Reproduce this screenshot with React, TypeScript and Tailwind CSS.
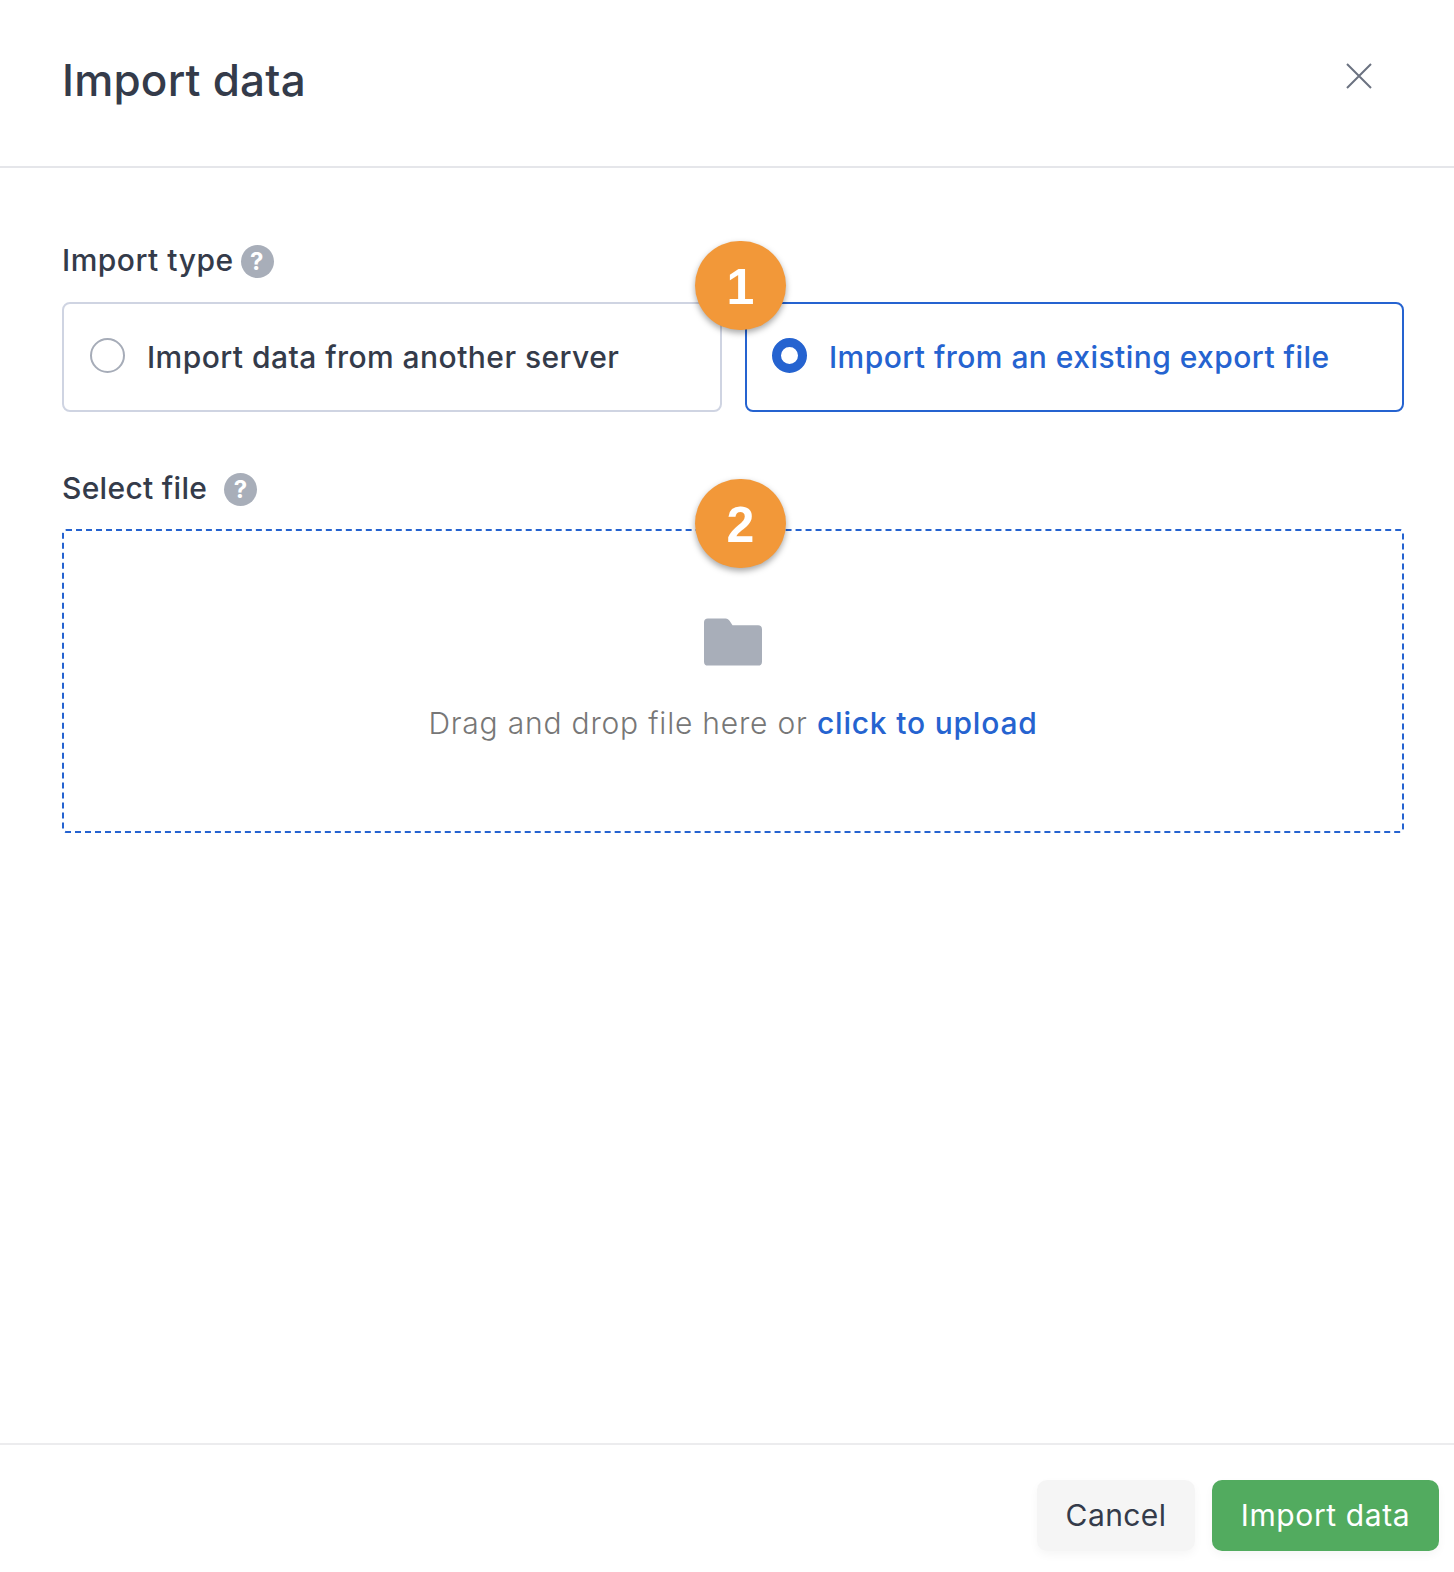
function HelpIcon() {
  return (
    <span className="flex h-[33px] w-[33px] items-center justify-center rounded-full bg-[#a8aeb9] text-[24px] font-bold leading-none text-white">
      ?
    </span>
  );
}

function Badge({ n, top }: { n: number; top: string }) {
  return (
    <div
      className={`absolute left-[695px] ${top} flex h-[89px] w-[91px] items-center justify-center rounded-full bg-[#f29839] pt-[4px] font-['Liberation_Sans',sans-serif] text-[50px] font-bold text-white shadow-[0_3px_6px_rgba(0,0,0,0.35)]`}
    >
      {n}
    </div>
  );
}

export default function App() {
  return (
    <div className="flex h-[1572px] w-[1454px] flex-col bg-white font-['Inter',sans-serif] text-[#343b4a]">
      <header className="flex h-[168px] shrink-0 items-start justify-between border-b-2 border-[#e5e6ea] pl-[62px] pr-[81px]">
        <h1 className="mt-[52px] text-[44px] font-medium leading-[56px] tracking-[0.2px]">Import data</h1>
        <svg className="mt-[62px] h-[28px] w-[28px]" viewBox="0 0 28 28" fill="none" stroke="#6b7280" strokeWidth="2">
          <path d="M2 2 L26 26 M26 2 L2 26" />
        </svg>
      </header>

      <main className="relative flex-1 pl-[62px] pr-[50px]">
        <div className="mt-[74px] flex h-[36px] items-center text-[30px] font-medium tracking-[0.5px]">
          <span>Import type</span>
          <span className="ml-[7px] mt-[3px]">
            <HelpIcon />
          </span>
        </div>
        <div className="mt-[24px] flex gap-[23px]">
          <label className="flex h-[110px] w-[660px] items-center rounded-lg border-2 border-[#cfd4e2] pl-[26px]">
            <span className="mb-[4px] h-[35px] w-[35px] rounded-full border-2 border-[#a6acb8]" />
            <span className="ml-[22px] text-[30px] font-medium tracking-[0.45px]">Import data from another server</span>
          </label>
          <label className="flex h-[110px] w-[659px] items-center rounded-lg border-2 border-[#2563d0] pl-[25px] text-[#2563d0]">
            <span className="mb-[4px] h-[35px] w-[35px] rounded-full border-[9px] border-[#2563d0]" />
            <span className="ml-[22px] text-[30px] font-medium tracking-[0.45px]">Import from an existing export file</span>
          </label>
        </div>

        <div className="mt-[58px] flex h-[36px] items-center text-[30px] font-medium tracking-[0.3px]">
          <span>Select file</span>
          <span className="ml-[17px] mt-[3px]">
            <HelpIcon />
          </span>
        </div>
        <div className="mt-[23px] flex h-[304px] w-[1342px] flex-col items-center rounded-sm border-2 border-dashed border-[#2563d0]">
          <svg className="mr-[1px] mt-[87px] h-[48px] w-[58px]" viewBox="0 0 59 48" fill="#a8aeb9">
            <path d="M4 0 H22 C24 0 25 1 26 2.5 L29 7 H55 C57.5 7 59 8.5 59 11 V44 C59 46.5 57.5 48 55 48 H4 C1.5 48 0 46.5 0 44 V4 C0 1.5 1.5 0 4 0 Z" />
          </svg>
          <p className="mt-[35px] text-[30px] font-light leading-[45px] tracking-[0.8px] text-[#777777]">
            Drag and drop file here or <span className="font-medium text-[#2563d0]">click to upload</span>
          </p>
        </div>

        <Badge n={1} top="top-[73px]" />
        <Badge n={2} top="top-[311px]" />
      </main>

      <footer className="flex h-[129px] shrink-0 items-start justify-end gap-[17px] border-t-2 border-[#ececee] pr-[15px] pt-[35px]">
        <button className="h-[71px] w-[158px] rounded-[10px] bg-[#f5f5f5] text-[30px] tracking-[0.4px] shadow-[0_4px_10px_rgba(0,0,0,0.04)]">
          Cancel
        </button>
        <button className="h-[71px] w-[227px] rounded-[10px] bg-[#52ab5f] text-[30px] tracking-[0.6px] text-white shadow-[0_4px_10px_rgba(0,0,0,0.04)]">
          Import data
        </button>
      </footer>
    </div>
  );
}
